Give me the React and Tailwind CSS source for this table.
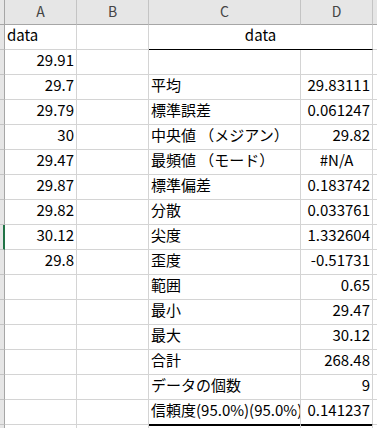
import React from 'react';

// Descriptive statistics output, as it looks in the sheet
const ROWS = [
  { a: 'data', aLeft: true, title: 'data' },
  { a: '29.91' },
  { a: '29.7', c: '平均', d: '29.83111' },
  { a: '29.79', c: '標準誤差', d: '0.061247' },
  { a: '30', c: '中央値 （メジアン）', d: '29.82' },
  { a: '29.47', c: '最頻値 （モード）', d: '#N/A', dCenter: true },
  { a: '29.87', c: '標準偏差', d: '0.183742' },
  { a: '29.82', c: '分散', d: '0.033761' },
  { a: '30.12', c: '尖度', d: '1.332604', selected: true },
  { a: '29.8', c: '歪度', d: '-0.51731' },
  { c: '範囲', d: '0.65' },
  { c: '最小', d: '29.47' },
  { c: '最大', d: '30.12' },
  { c: '合計', d: '268.48' },
  { c: 'データの個数', d: '9' },
  { c: '信頼度(95.0%)(95.0%)', d: '0.141237', last: true },
  {},
];

const cellCls =
  'h-[25px] shrink-0 border-r border-b border-[#d4d4d4] px-[2px] leading-[20px] whitespace-nowrap overflow-hidden';

function Header() {
  const headCls =
    'h-[25px] shrink-0 border-r border-b border-r-[#c4c4c4] border-b-[#a6a6a6] bg-[#e6e6e6] text-center text-[14px] leading-[23px] text-[#444]';
  return (
    <div className="flex">
      <div className="h-[25px] w-[5px] shrink-0 border-r border-b border-[#a6a6a6] bg-[#e6e6e6]" />
      <div className={headCls + ' w-[72px]'}>A</div>
      <div className={headCls + ' w-[72px]'}>B</div>
      <div className={headCls + ' w-[152px]'}>C</div>
      <div className={headCls + ' w-[72px]'}>D</div>
      <div className={headCls + ' w-[20px] border-r-0'} />
    </div>
  );
}

function Row({ row }) {
  const { a, aLeft, title, c, d, dCenter, selected, last } = row;
  return (
    <div className="flex items-start">
      <div
        className={
          'h-[25px] w-[5px] shrink-0 border-b border-b-[#c4c4c4] bg-[#e6e6e6] ' +
          (selected ? 'border-r-2 border-r-[#217346]' : 'border-r border-r-[#a6a6a6]')
        }
      />
      <div className={cellCls + ' w-[72px] ' + (aLeft ? 'text-left' : 'text-right')}>{a}</div>
      <div className={cellCls + ' w-[72px]'} />
      {title ? (
        <div className={cellCls + ' w-[224px] border-b-black text-center'}>{title}</div>
      ) : (
        <>
          <div
            className={
              cellCls +
              ' w-[152px] text-left' +
              (last ? ' h-[26px] mb-[-1px] border-b-2 border-b-black' : '')
            }
          >
            {c}
          </div>
          <div
            className={
              cellCls +
              ' w-[72px] ' +
              (dCenter ? 'text-center' : 'text-right') +
              (last ? ' h-[26px] mb-[-1px] border-b-2 border-b-black' : '')
            }
          >
            {d}
          </div>
        </>
      )}
      <div className={cellCls + ' w-[20px] border-r-0'} />
    </div>
  );
}

export default function App() {
  return (
    <div className="h-[428px] w-[377px] overflow-hidden bg-white font-['Noto_Sans_CJK_JP',sans-serif] text-[15px] text-black">
      <Header />
      {ROWS.map((row, i) => (
        <Row key={i} row={row} />
      ))}
    </div>
  );
}
